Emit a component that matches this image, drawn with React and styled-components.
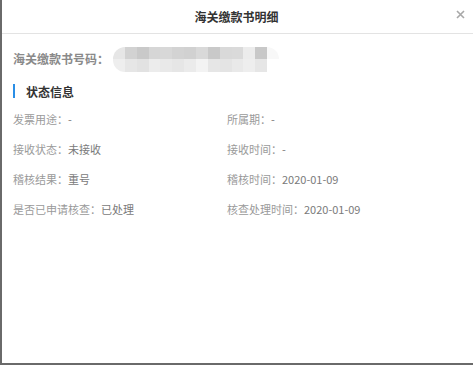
import React from "react";
import styled, { createGlobalStyle } from "styled-components";

const Global = createGlobalStyle`
  html, body { margin: 0; padding: 0; background: #fff; }
  body { font-family: "Noto Sans CJK SC", "Noto Sans", sans-serif; }
  * { box-sizing: border-box; }
`;

const Dialog = styled.div`
  width: 473px;
  height: 365px;
  background: #fff;
  border-left: 2px solid #6a6a6a;
  border-bottom: 2px solid #6a6a6a;
  display: flex;
  flex-direction: column;
`;

const Header = styled.div`
  height: 34px;
  border-bottom: 1px solid #e3e3e3;
  display: flex;
  align-items: center;
  justify-content: center;
  position: relative;
  padding-top: 0;
`;

const Title = styled.div`
  font-size: 12px;
  font-weight: 700;
  color: #333;
  line-height: 16px;
  margin-left: -2px;
`;

const Close = styled.button`
  position: absolute;
  right: 8px;
  top: 9px;
  width: 10px;
  height: 10px;
  padding: 0;
  border: 0;
  background: transparent;
  display: flex;
  align-items: center;
  justify-content: center;
`;

const Body = styled.div`
  padding: 13px 0 0 11px;
  display: flex;
  flex-direction: column;
`;

const NumberRow = styled.div`
  height: 24px;
  display: flex;
  align-items: center;
`;

const NumberLabel = styled.span`
  font-size: 12px;
  font-weight: 700;
  color: #8a8a8a;
  line-height: 16px;
`;

const Blur = styled.div`
  margin-left: 4px;
  width: 166px;
  height: 25px;
  border-radius: 12px;
  overflow: hidden;
  display: grid;
  grid-template-columns: repeat(14, 1fr);
  grid-template-rows: 1fr 1fr;
  filter: blur(0.6px);
`;

const Cell = styled.div`
  background: ${(p) => p.$c};
`;

const SectionTitle = styled.div`
  margin-top: 13px;
  height: 14px;
  border-left: 2px solid #2a8ee6;
  padding-left: 11px;
  display: flex;
  align-items: center;
  font-size: 12px;
  font-weight: 700;
  color: #333;
`;

const Grid = styled.div`
  margin-top: 6px;
  display: grid;
  grid-template-columns: 214px 1fr;
`;

const Item = styled.div`
  height: 30px;
  display: flex;
  align-items: center;
  font-size: 11px;
  white-space: nowrap;
`;

const Label = styled.span`
  color: #9a9a9a;
`;

const Value = styled.span`
  color: #7a7a7a;
`;

const top = ["#e6e6e6","#d2d2d2","#c9c9c9","#d6d6d6","#d8d8d8","#d3d3d3","#d1d1d1","#d9d9d9","#c9c9c9","#d9d9d9","#dadada","#ececec","#c8c8c8","#f8f8f8"];
const bot = ["#eeeeee","#e6e6e6","#e2e2e2","#ececec","#e9e9e9","#e6e6e6","#ebebeb","#f3f3f3","#e6e6e6","#e4e4e4","#e9e9e9","#eeeeee","#e6e6e6","#ffffff"];

const items = [
  ["发票用途：", "-"],
  ["所属期：", "-"],
  ["接收状态：", "未接收"],
  ["接收时间：", "-"],
  ["稽核结果：", "重号"],
  ["稽核时间：", "2020-01-09"],
  ["是否已申请核查：", "已处理"],
  ["核查处理时间：", "2020-01-09"],
];

export default function App() {
  return (
    <>
      <Global />
      <Dialog>
        <Header>
          <Title>海关缴款书明细</Title>
          <Close aria-label="关闭">
            <svg width="9" height="9" viewBox="0 0 9 9">
              <path d="M1 1L8 8M8 1L1 8" stroke="#a8a8a8" strokeWidth="1.6" />
            </svg>
          </Close>
        </Header>
        <Body>
          <NumberRow>
            <NumberLabel>海关缴款书号码：</NumberLabel>
            <Blur>
              {top.map((c, i) => <Cell key={"t" + i} $c={c} />)}
              {bot.map((c, i) => <Cell key={"b" + i} $c={c} />)}
            </Blur>
          </NumberRow>
          <SectionTitle>状态信息</SectionTitle>
          <Grid>
            {items.map(([l, v]) => (
              <Item key={l}>
                <Label>{l}</Label>
                <Value>{v}</Value>
              </Item>
            ))}
          </Grid>
        </Body>
      </Dialog>
    </>
  );
}
